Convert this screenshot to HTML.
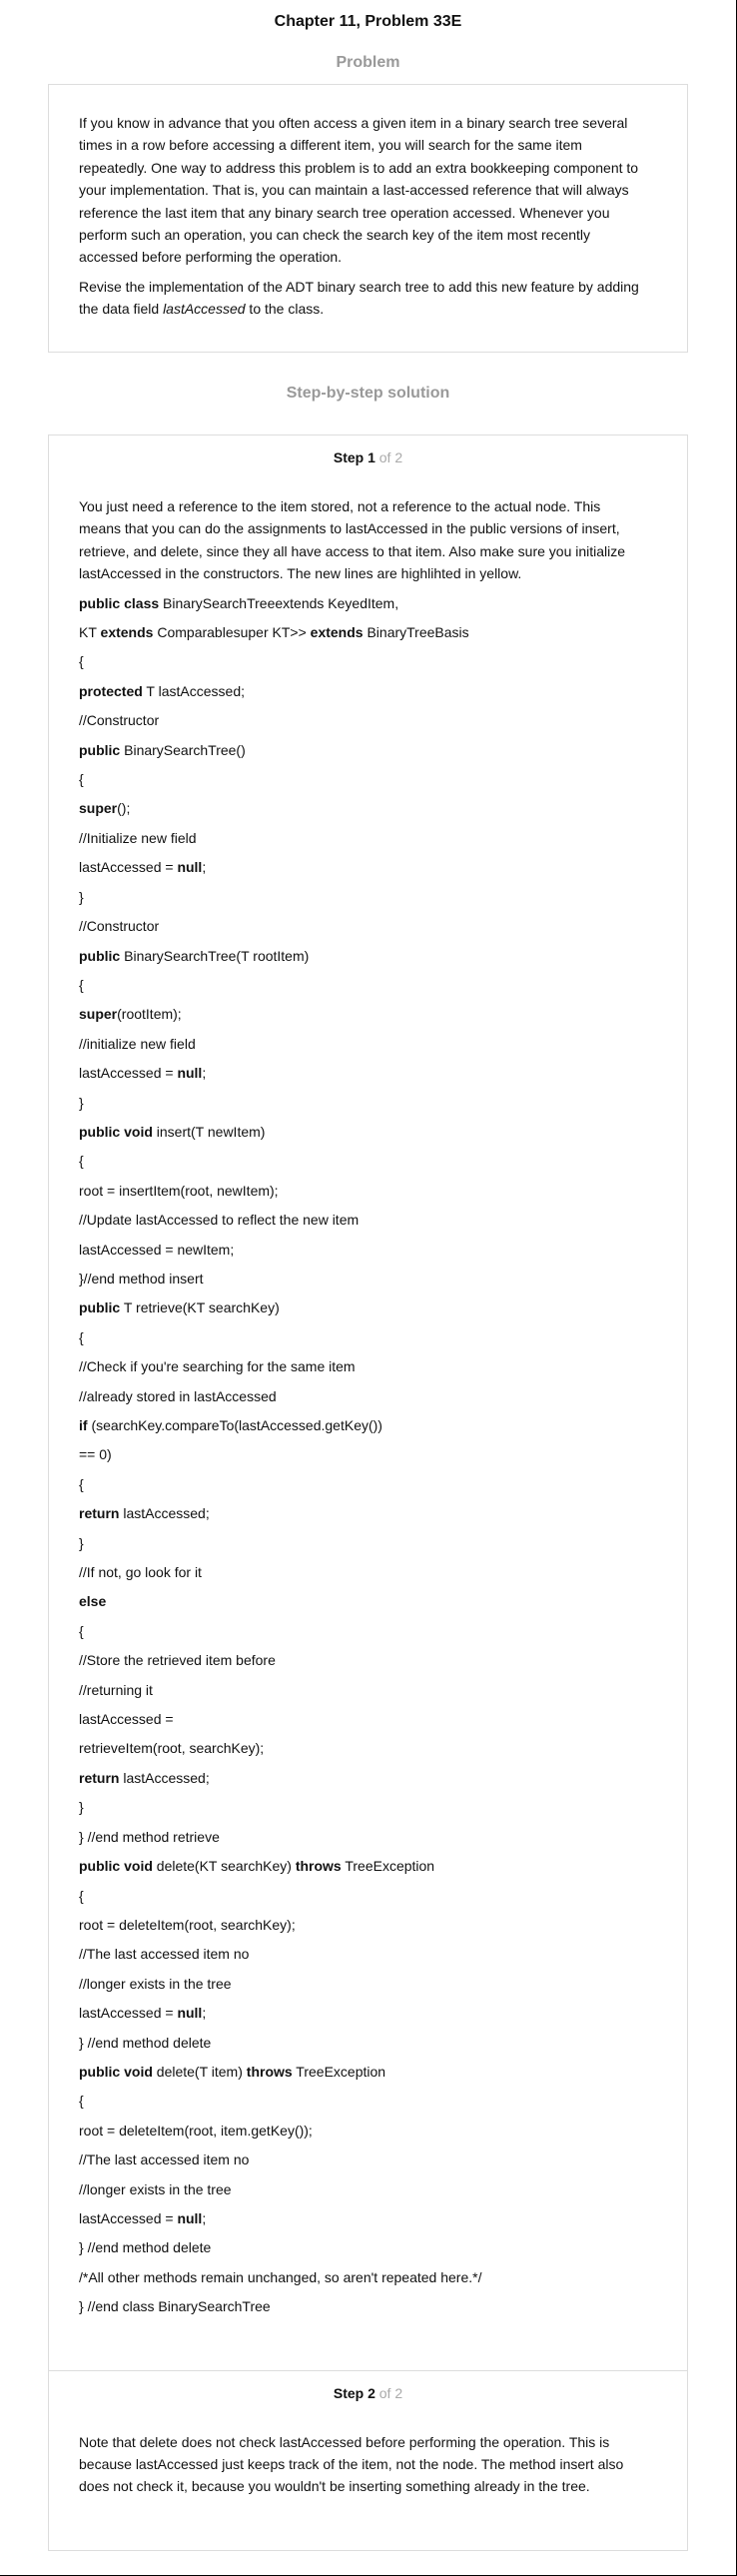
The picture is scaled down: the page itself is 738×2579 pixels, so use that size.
<!DOCTYPE html>
<html><head><meta charset="utf-8"><style>
html,body{margin:0;padding:0;background:#fff}
body{width:737px;height:2578px;border-right:1px solid #000;border-bottom:1px solid #000;font-family:"Liberation Sans",Arial,sans-serif;font-size:14px;color:#111;position:relative;overflow:hidden}
h1{position:absolute;top:12px;left:0;width:737px;margin:0;text-align:center;font-size:16px;line-height:20px;font-weight:bold;color:#111}
.h2{position:absolute;left:0;width:737px;margin:0;text-align:center;font-size:16px;line-height:20px;font-weight:bold;color:#999}
.box{position:absolute;left:48px;width:639px;border:1px solid #ddd}
.box p{margin:0 0 7px;line-height:22.4px;white-space:nowrap}
.pb{top:84px;padding:27px 37px 26px 30px;width:572px;height:214px}
.step{padding:12px 37px 45px 30px}
.step+.step{border-top:1px solid #ddd}
.sh{text-align:center;font-weight:bold;line-height:20px;margin-bottom:28px;margin-right:-7px}
.sh span{font-weight:normal;color:#aaa}
</style></head><body>
<h1>Chapter 11, Problem 33E</h1>
<div class="h2" style="top:53px">Problem</div>
<div class="box pb">
<p>If you know in advance that you often access a given item in a binary search tree several<br>times in a row before accessing a different item, you will search for the same item<br>repeatedly. One way to address this problem is to add an extra bookkeeping component to<br>your implementation. That is, you can maintain a last-accessed reference that will always<br>reference the last item that any binary search tree operation accessed. Whenever you<br>perform such an operation, you can check the search key of the item most recently<br>accessed before performing the operation.</p>
<p>Revise the implementation of the ADT binary search tree to add this new feature by adding<br>the data field <i>lastAccessed</i> to the class.</p>
</div>
<div class="h2" style="top:384px">Step-by-step solution</div>
<div class="box" style="top:435px">
<div class="step">
<div class="sh">Step 1 <span>of 2</span></div>
<p>You just need a reference to the item stored, not a reference to the actual node. This<br>means that you can do the assignments to lastAccessed in the public versions of insert,<br>retrieve, and delete, since they all have access to that item. Also make sure you initialize<br>lastAccessed in the constructors. The new lines are highlihted in yellow.</p>
<p><b>public class</b> BinarySearchTreeextends KeyedItem,</p>
<p>KT <b>extends</b> Comparablesuper KT&gt;&gt; <b>extends</b> BinaryTreeBasis</p>
<p>{</p>
<p><b>protected</b> T lastAccessed;</p>
<p>//Constructor</p>
<p><b>public</b> BinarySearchTree()</p>
<p>{</p>
<p><b>super</b>();</p>
<p>//Initialize new field</p>
<p>lastAccessed = <b>null</b>;</p>
<p>}</p>
<p>//Constructor</p>
<p><b>public</b> BinarySearchTree(T rootItem)</p>
<p>{</p>
<p><b>super</b>(rootItem);</p>
<p>//initialize new field</p>
<p>lastAccessed = <b>null</b>;</p>
<p>}</p>
<p><b>public void</b> insert(T newItem)</p>
<p>{</p>
<p>root = insertItem(root, newItem);</p>
<p>//Update lastAccessed to reflect the new item</p>
<p>lastAccessed = newItem;</p>
<p>}//end method insert</p>
<p><b>public</b> T retrieve(KT searchKey)</p>
<p>{</p>
<p>//Check if you're searching for the same item</p>
<p>//already stored in lastAccessed</p>
<p><b>if</b> (searchKey.compareTo(lastAccessed.getKey())</p>
<p>== 0)</p>
<p>{</p>
<p><b>return</b> lastAccessed;</p>
<p>}</p>
<p>//If not, go look for it</p>
<p><b>else</b></p>
<p>{</p>
<p>//Store the retrieved item before</p>
<p>//returning it</p>
<p>lastAccessed =</p>
<p>retrieveItem(root, searchKey);</p>
<p><b>return</b> lastAccessed;</p>
<p>}</p>
<p>} //end method retrieve</p>
<p><b>public void</b> delete(KT searchKey) <b>throws</b> TreeException</p>
<p>{</p>
<p>root = deleteItem(root, searchKey);</p>
<p>//The last accessed item no</p>
<p>//longer exists in the tree</p>
<p>lastAccessed = <b>null</b>;</p>
<p>} //end method delete</p>
<p><b>public void</b> delete(T item) <b>throws</b> TreeException</p>
<p>{</p>
<p>root = deleteItem(root, item.getKey());</p>
<p>//The last accessed item no</p>
<p>//longer exists in the tree</p>
<p>lastAccessed = <b>null</b>;</p>
<p>} //end method delete</p>
<p>/*All other methods remain unchanged, so aren't repeated here.*/</p>
<p>} //end class BinarySearchTree</p>
</div>
<div class="step">
<div class="sh">Step 2 <span>of 2</span></div>
<p>Note that delete does not check lastAccessed before performing the operation. This is<br>because lastAccessed just keeps track of the item, not the node. The method insert also<br>does not check it, because you wouldn't be inserting something already in the tree.</p>
</div>
</div>
</body></html>
